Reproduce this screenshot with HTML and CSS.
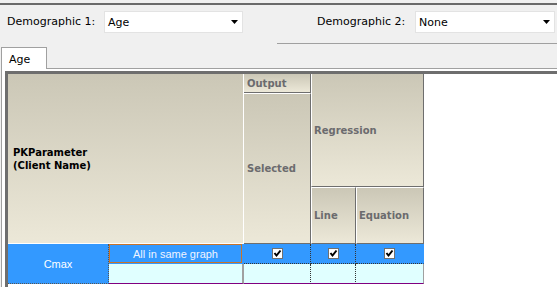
FILE: index.html
```html
<!DOCTYPE html>
<html lang="en">
<head>
    <meta charset="UTF-8">
    <meta name="viewport" content="width=device-width, initial-scale=1.0">
    <title>Demographic Output</title>
    <link rel="stylesheet" href="styles.css">
</head>
<body>
    <div class="topbar"></div>
    <div class="toolbar">
        <div class="group">
            <label class="field-label">Demographic 1:</label>
            <div class="combo combo-first">
                <span>Age</span>
                <svg class="arrow" width="7" height="4" viewBox="0 0 7 4"><polygon points="0,0 7,0 3.5,4" fill="#000"/></svg>
            </div>
        </div>
        <div class="group group-right">
            <label class="field-label">Demographic 2:</label>
            <div class="combo combo-second">
                <span>None</span>
                <svg class="arrow" width="7" height="4" viewBox="0 0 7 4"><polygon points="0,0 7,0 3.5,4" fill="#000"/></svg>
            </div>
        </div>
    </div>

    <div class="tabstrip">
        <div class="tab">Age</div>
    </div>

    <div class="tabpanel">
        <div class="grid">
            <div class="hd hd-pk">PKParameter<br>(Client Name)</div>
            <div class="hd hd-output">Output</div>
            <div class="hd hd-selected">Selected</div>
            <div class="hd hd-regression">Regression</div>
            <div class="hd hd-line">Line</div>
            <div class="hd hd-equation">Equation</div>

            <div class="cell-name">Cmax</div>
            <div class="cell-group"><div class="focus">All in same graph</div></div>
            <div class="cell-check"><svg width="11" height="11" viewBox="0 0 11 11"><rect x="0.5" y="0.5" width="10" height="10" fill="#fff" stroke="#707070"/><polyline points="2.5,5 4.5,7.5 8.5,2.5" fill="none" stroke="#000" stroke-width="2"/></svg></div>
            <div class="cell-check"><svg width="11" height="11" viewBox="0 0 11 11"><rect x="0.5" y="0.5" width="10" height="10" fill="#fff" stroke="#707070"/><polyline points="2.5,5 4.5,7.5 8.5,2.5" fill="none" stroke="#000" stroke-width="2"/></svg></div>
            <div class="cell-check last"><svg width="11" height="11" viewBox="0 0 11 11"><rect x="0.5" y="0.5" width="10" height="10" fill="#fff" stroke="#707070"/><polyline points="2.5,5 4.5,7.5 8.5,2.5" fill="none" stroke="#000" stroke-width="2"/></svg></div>

            <div class="cell-empty cell-group-2"></div>
            <div class="cell-empty"></div>
            <div class="cell-empty"></div>
            <div class="cell-empty last"></div>
        </div>
    </div>
</body>
</html>
```

FILE: styles.css
```css
body {
    margin: 0;
    background-color: #f0f0f0;
    font-family: "DejaVu Sans", sans-serif;
    font-size: 11px;
    color: #000;
    overflow: hidden;
}
.topbar {
    height: 3px;
    border-bottom: 2px solid #6a6a6a;
}
.toolbar {
    display: flex;
    height: 39px;
}
.group {
    display: flex;
    align-items: flex-start;
    box-sizing: border-box;
    width: 277px;
    padding: 6px 0 0 7px;
}
.group-right {
    flex: 1;
    padding-left: 40px;
    border-bottom: 1px solid #a0a0a0;
}
.field-label {
    line-height: 22px;
    width: 97px;
}
.group-right .field-label {
    width: 98px;
}
.combo {
    display: flex;
    align-items: center;
    justify-content: space-between;
    box-sizing: border-box;
    height: 22px;
    padding: 0 4px 0 3px;
    background-color: #fff;
    border: 1px solid #e3e3e3;
}
.combo-first {
    width: 139px;
}
.combo-second {
    width: 140px;
}
.arrow {
    display: block;
}
.tabstrip {
    height: 24px;
    box-sizing: border-box;
    padding: 3px 0 0 1px;
}
.tab {
    position: relative;
    width: 46px;
    height: 22px;
    box-sizing: border-box;
    padding: 5px 0 0 7px;
    background-color: #fff;
    border: 1px solid #a0a0a0;
    border-bottom: none;
}
.tabpanel {
    height: 219px;
    box-sizing: border-box;
    margin-left: 1px;
    padding: 2px 0 0 3px;
    background-color: #fff;
    border-top: 1px solid #a0a0a0;
    border-left: 1px solid #a0a0a0;
}
.grid {
    display: grid;
    grid-template-columns: 101px 135px 67px 45px 68px;
    grid-template-rows: 19px 94px 57px 20px 20px;
    height: 216px;
    background-color: #fff;
    border-top: 3px solid #6e6e6e;
    border-left: 3px solid #6e6e6e;
}
.hd {
    display: flex;
    align-items: center;
    box-sizing: border-box;
    padding-left: 3px;
    background: linear-gradient(#cbc7b6, #ece8d8);
    border-right: 1px solid #6e6e6e;
    border-bottom: 1px solid #6e6e6e;
    font-weight: bold;
    font-size: 10px;
    color: #6b6b6e;
}
.hd-pk {
    grid-column: 1 / 3;
    grid-row: 1 / 4;
    padding-left: 5px;
    line-height: 13px;
    color: #000;
    border-right-color: #fff;
    border-bottom-color: #fff;
}
.hd-output {
    grid-column: 3;
    grid-row: 1;
}
.hd-selected {
    grid-column: 3;
    grid-row: 2 / 4;
    border-top: 1px solid #fff;
}
.hd-regression {
    grid-column: 4 / 6;
    grid-row: 1 / 3;
    padding-left: 2px;
    border-left: 1px solid #fff;
}
.hd-line {
    grid-column: 4;
    grid-row: 3;
    padding-left: 2px;
    border-top: 1px solid #fff;
    border-left: 1px solid #fff;
}
.hd-equation {
    grid-column: 5;
    grid-row: 3;
    padding-left: 2px;
    border-top: 1px solid #fff;
    border-left: 1px solid #fff;
}
.cell-name {
    grid-column: 1;
    grid-row: 4 / 6;
    display: flex;
    align-items: center;
    justify-content: center;
    box-sizing: border-box;
    background-color: #3399ff;
    color: #fff;
    font-family: "Liberation Sans", Arial, sans-serif;
    border-right: 1px dotted #555;
    border-bottom: 1px dotted #555;
}
.cell-group {
    box-sizing: border-box;
    padding: 0 2px 1px 0;
    background-color: #3399ff;
}
.focus {
    display: flex;
    align-items: center;
    justify-content: center;
    box-sizing: border-box;
    height: 100%;
    border: 1px solid #c8742a;
    color: #f0f4ff;
    font-family: "Liberation Sans", Arial, sans-serif;
}
.cell-check {
    display: flex;
    align-items: center;
    justify-content: center;
    box-sizing: border-box;
    background-color: #3399ff;
    border-right: 1px dotted #333;
    border-bottom: 1px dotted #333;
}
.cell-check svg {
    display: block;
}
.cell-check.last {
    border-right: 1px solid #3399ff;
}
.cell-empty {
    box-sizing: border-box;
    background-color: #e0ffff;
    border-right: 1px dotted #333;
    border-bottom: 1px solid #800080;
}
.cell-group-2 {
    border-right: 2px solid #a0a0a0;
}
.cell-empty.last {
    border-right: 1px solid #a0a0a0;
}
```
